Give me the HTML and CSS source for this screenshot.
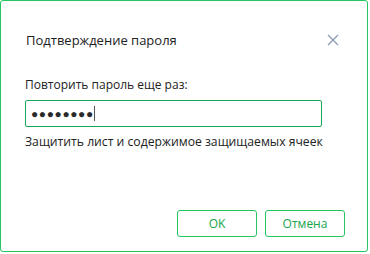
FILE: index.html
```html
<!DOCTYPE html>
<html>
<head>
<meta charset="utf-8">
<link rel="stylesheet" href="styles.css">
</head>
<body>
<div class="dialog">
  <div class="header">
    <span class="title">Подтверждение пароля</span>
    <svg class="close" width="12" height="12" viewBox="0 0 12 12"><path d="M1 1L11 11M11 1L1 11" stroke="#8a9bb0" stroke-width="1.3" fill="none"/></svg>
  </div>
  <div class="body">
    <div class="label">Повторить пароль еще раз:</div>
    <div class="input"><span class="dots">●●●●●●●●</span><span class="caret"></span></div>
    <div class="hint">Защитить лист и содержимое защищаемых ячеек</div>
  </div>
  <div class="footer">
    <button class="btn">OK</button>
    <button class="btn">Отмена</button>
  </div>
</div>
</body>
</html>
```
FILE: styles.css
```css
html, body { margin: 0; padding: 0; background: #fff; }
body { font-family: "Open Sans", "Noto Sans", sans-serif; color: #222; }
.dialog {
  box-sizing: border-box;
  width: 368px;
  height: 252px;
  border: 1px solid #22c55e;
  border-radius: 3px;
  display: flex;
  flex-direction: column;
}
.header {
  display: flex;
  align-items: center;
  justify-content: space-between;
  padding: 29px 28px 0 25px;
  height: 20px;
}
.title { font-size: 13px; }
.close { display: block; }
.body { padding: 27px 45px 0 24px; }
.label { font-size: 12px; line-height: 16px; }
.input {
  margin-top: 7px;
  height: 25px;
  border: 1px solid #17a85a;
  border-radius: 2px;
  display: flex;
  align-items: center;
  padding-left: 5px;
}
.dots { font-size: 12px; letter-spacing: 0.6px; color: #2a2a2a; line-height: 1; }
.caret { width: 1px; height: 15px; background: #555; margin-left: 0; }
.hint { font-size: 12.2px; margin-top: 7px; line-height: 16px; white-space: nowrap; }
.footer {
  margin-top: auto;
  display: flex;
  justify-content: flex-end;
  gap: 8px;
  padding: 0 22px 14px 0;
}
.btn {
  width: 80px;
  height: 27px;
  background: #fff;
  border: 1px solid #22c55e;
  border-radius: 3px;
  font-family: "Open Sans", "Noto Sans", sans-serif;
  font-size: 12px;
  color: #16a34a;
  padding: 0;
}
```
